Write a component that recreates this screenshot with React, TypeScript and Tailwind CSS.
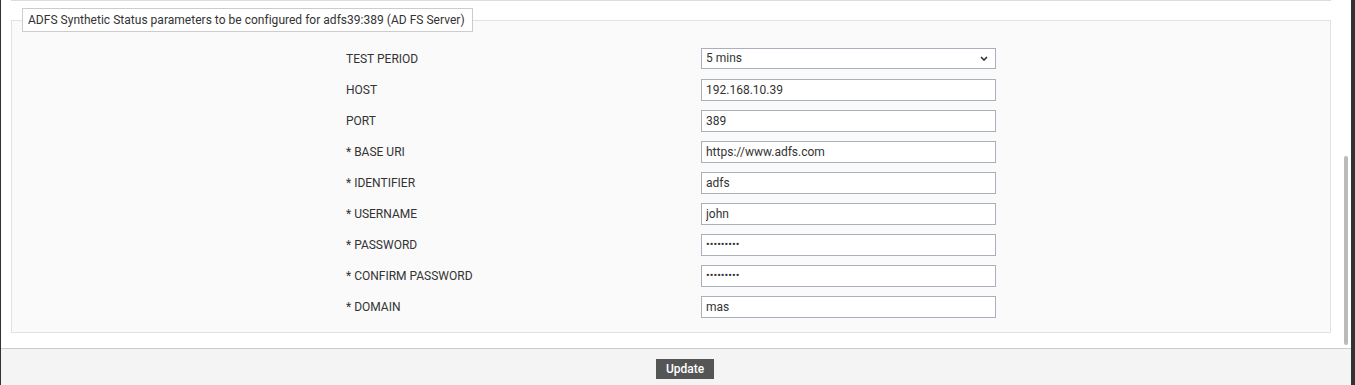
import React from "react";

const rows: { label: string; value: string; type?: string }[] = [
  { label: "HOST", value: "192.168.10.39" },
  { label: "PORT", value: "389" },
  { label: "* BASE URI", value: "https://www.adfs.com" },
  { label: "* IDENTIFIER", value: "adfs" },
  { label: "* USERNAME", value: "john" },
  { label: "* PASSWORD", value: "secret123", type: "password" },
  { label: "* CONFIRM PASSWORD", value: "secret123", type: "password" },
  { label: "* DOMAIN", value: "mas" },
];

export default function App() {
  return (
    <div className="flex h-[385px] w-[1355px] overflow-hidden font-['Roboto',sans-serif] text-[12px] text-[#333]">
      <div className="w-px bg-[#333]" />
      <div className="flex flex-1 flex-col">
        <div className="relative h-[348px] bg-white">
          <div className="ml-[10px] mr-[20px] h-px bg-[#dddddd]" />
          <fieldset className="ml-[10px] mr-[20px] mt-[7px] border border-[#e2e2e2] bg-[#fafafa] px-0 pb-[10px] pt-[11px]">
            <legend className="ml-[10px] border border-[#cccccc] bg-white pl-[5px] pr-[7px] text-[12px] leading-[22px] tracking-[0.02px] text-[#333]">
              ADFS Synthetic Status parameters to be configured for adfs39:389 (AD FS Server)
            </legend>
            <div className="mx-auto grid w-[660px] grid-cols-[355px_305px]">
              <div className="flex h-[31px] items-center px-[5px] pt-[1px]">TEST PERIOD</div>
              <div className="flex h-[31px] items-center px-[5px]">
                <div className="relative h-[21px] w-full">
                  <select
                    defaultValue="5"
                    className="h-[21px] w-full appearance-none border border-[#a9b0bc] bg-white px-[4px] text-[12px] leading-[19px] text-[#333] outline-none"
                  >
                    <option value="5">5 mins</option>
                    <option value="10">10 mins</option>
                    <option value="15">15 mins</option>
                  </select>
                  <svg
                    className="pointer-events-none absolute right-[8px] top-[8px]"
                    width="8"
                    height="5"
                    viewBox="0 0 8 5"
                  >
                    <path d="M1 1 L4 4 L7 1" fill="none" stroke="#333" strokeWidth="1.6" />
                  </svg>
                </div>
              </div>
              {rows.map((r) => (
                <React.Fragment key={r.label}>
                  <div className="flex h-[31px] items-center px-[5px]">{r.label}</div>
                  <div className="flex h-[31px] items-center px-[5px]">
                    <input
                      type={r.type ?? "text"}
                      defaultValue={r.value}
                      className={
                        r.type === "password"
                          ? "h-[22px] w-full border border-[#a9b0bc] bg-white px-[4px] text-[11px] text-[#333] outline-none"
                          : "h-[22px] w-full border border-[#a9b0bc] bg-white px-[4px] text-[12px] text-[#333] outline-none"
                      }
                    />
                  </div>
                </React.Fragment>
              ))}
            </div>
          </fieldset>
          <div className="absolute right-[3px] top-[156px] h-[189px] w-[4px] rounded-full bg-[#bbbbbb]" />
        </div>
        <div className="flex-1 border-t border-[#cccccc] bg-[#f4f4f4] pl-[655px] pt-[10px]">
          <button className="h-[20px] bg-[#555555] px-[10px] text-[12px] font-medium leading-[20px] text-white">
            Update
          </button>
        </div>
      </div>
      <div className="w-[4px] bg-[#333]" />
    </div>
  );
}
